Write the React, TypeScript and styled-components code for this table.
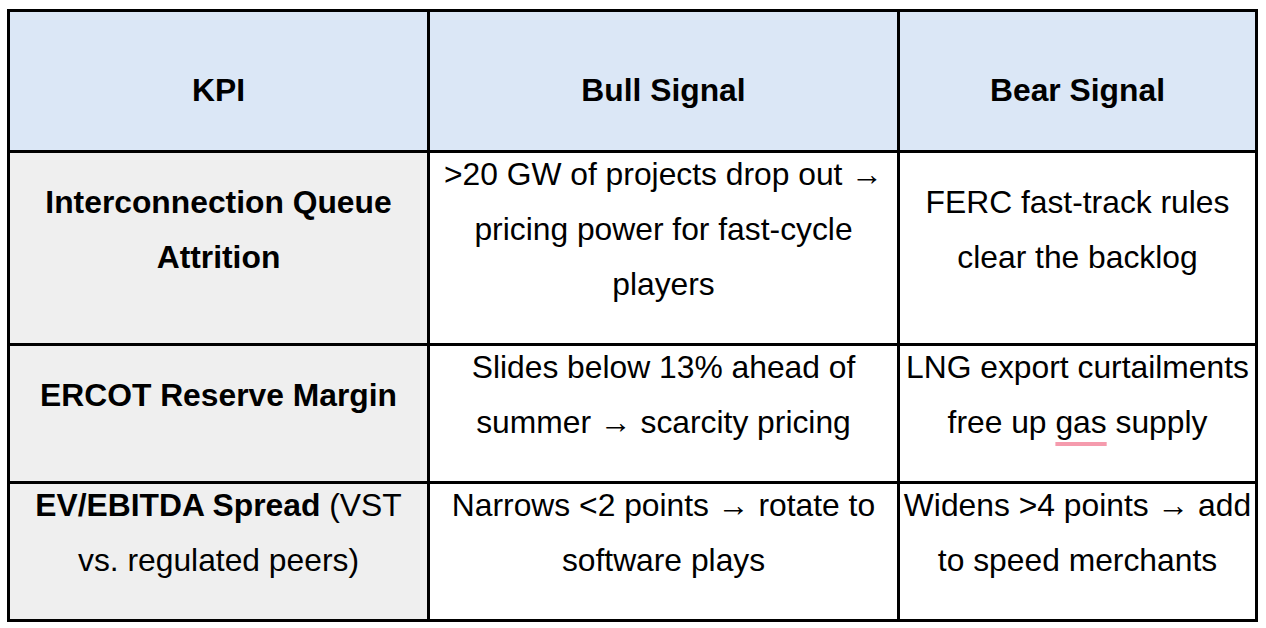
import React from 'react';
import styled, { createGlobalStyle } from 'styled-components';

type Row = {
  kpi: React.ReactNode;
  bull: React.ReactNode;
  bear: React.ReactNode;
};

const GlobalStyle = createGlobalStyle`
  html, body {
    margin: 0;
    padding: 0;
    background: #ffffff;
  }
  body {
    font-family: "Liberation Sans", Arial, sans-serif;
    color: #000000;
  }
`;

const Page = styled.div`
  padding: 9px 0 0 7px;
`;

const Table = styled.table`
  width: 1248px;
  table-layout: fixed;
  border-collapse: collapse;
  font-size: 31.8px;
  line-height: 55px;
`;

const Col = styled.col<{ $width: number }>`
  width: ${(p) => p.$width}px;
`;

const HeadCell = styled.th`
  background: #dbe7f6;
  border: 3px solid #000000;
  padding: 51px 2px 32px;
  font-weight: 700;
  text-align: center;
  vertical-align: middle;
`;

const Cell = styled.td<{ $label?: boolean }>`
  background: ${(p) => (p.$label ? '#efefef' : '#ffffff')};
  border: 3px solid #000000;
  padding: 0 2px 31px;
  text-align: center;
  vertical-align: middle;
  font-weight: 400;
`;

// text sits high in its line box, extra leading falls below it
const CellText = styled.div`
  margin-top: -6px;
`;

const Strong = styled.strong`
  font-weight: 700;
`;

const Flagged = styled.span`
  text-decoration: underline;
  text-decoration-color: #f59bad;
  text-decoration-thickness: 4px;
  text-underline-offset: 9px;
`;

const rows: Row[] = [
  {
    kpi: <Strong>Interconnection Queue Attrition</Strong>,
    bull: <>&gt;20 GW of projects drop out → pricing power for fast-cycle players</>,
    bear: <>FERC fast-track rules clear the backlog</>,
  },
  {
    kpi: <Strong>ERCOT Reserve Margin</Strong>,
    bull: <>Slides below 13% ahead of summer → scarcity pricing</>,
    bear: (
      <>
        LNG export curtailments free up <Flagged>gas</Flagged> supply
      </>
    ),
  },
  {
    kpi: (
      <>
        <Strong>EV/EBITDA Spread</Strong> (VST vs. regulated peers)
      </>
    ),
    bull: <>Narrows &lt;2 points → rotate to software plays</>,
    bear: <>Widens &gt;4 points → add to speed merchants</>,
  },
];

const App = () => {
  return (
    <>
      <GlobalStyle />
      <Page>
        <Table>
          <colgroup>
            <Col $width={420} />
            <Col $width={470} />
            <Col $width={358} />
          </colgroup>
          <thead>
            <tr>
              <HeadCell>KPI</HeadCell>
              <HeadCell>Bull Signal</HeadCell>
              <HeadCell>Bear Signal</HeadCell>
            </tr>
          </thead>
          <tbody>
            {rows.map((row, i) => (
              <tr key={i}>
                <Cell $label>
                  <CellText>{row.kpi}</CellText>
                </Cell>
                <Cell>
                  <CellText>{row.bull}</CellText>
                </Cell>
                <Cell>
                  <CellText>{row.bear}</CellText>
                </Cell>
              </tr>
            ))}
          </tbody>
        </Table>
      </Page>
    </>
  );
};

export default App;
